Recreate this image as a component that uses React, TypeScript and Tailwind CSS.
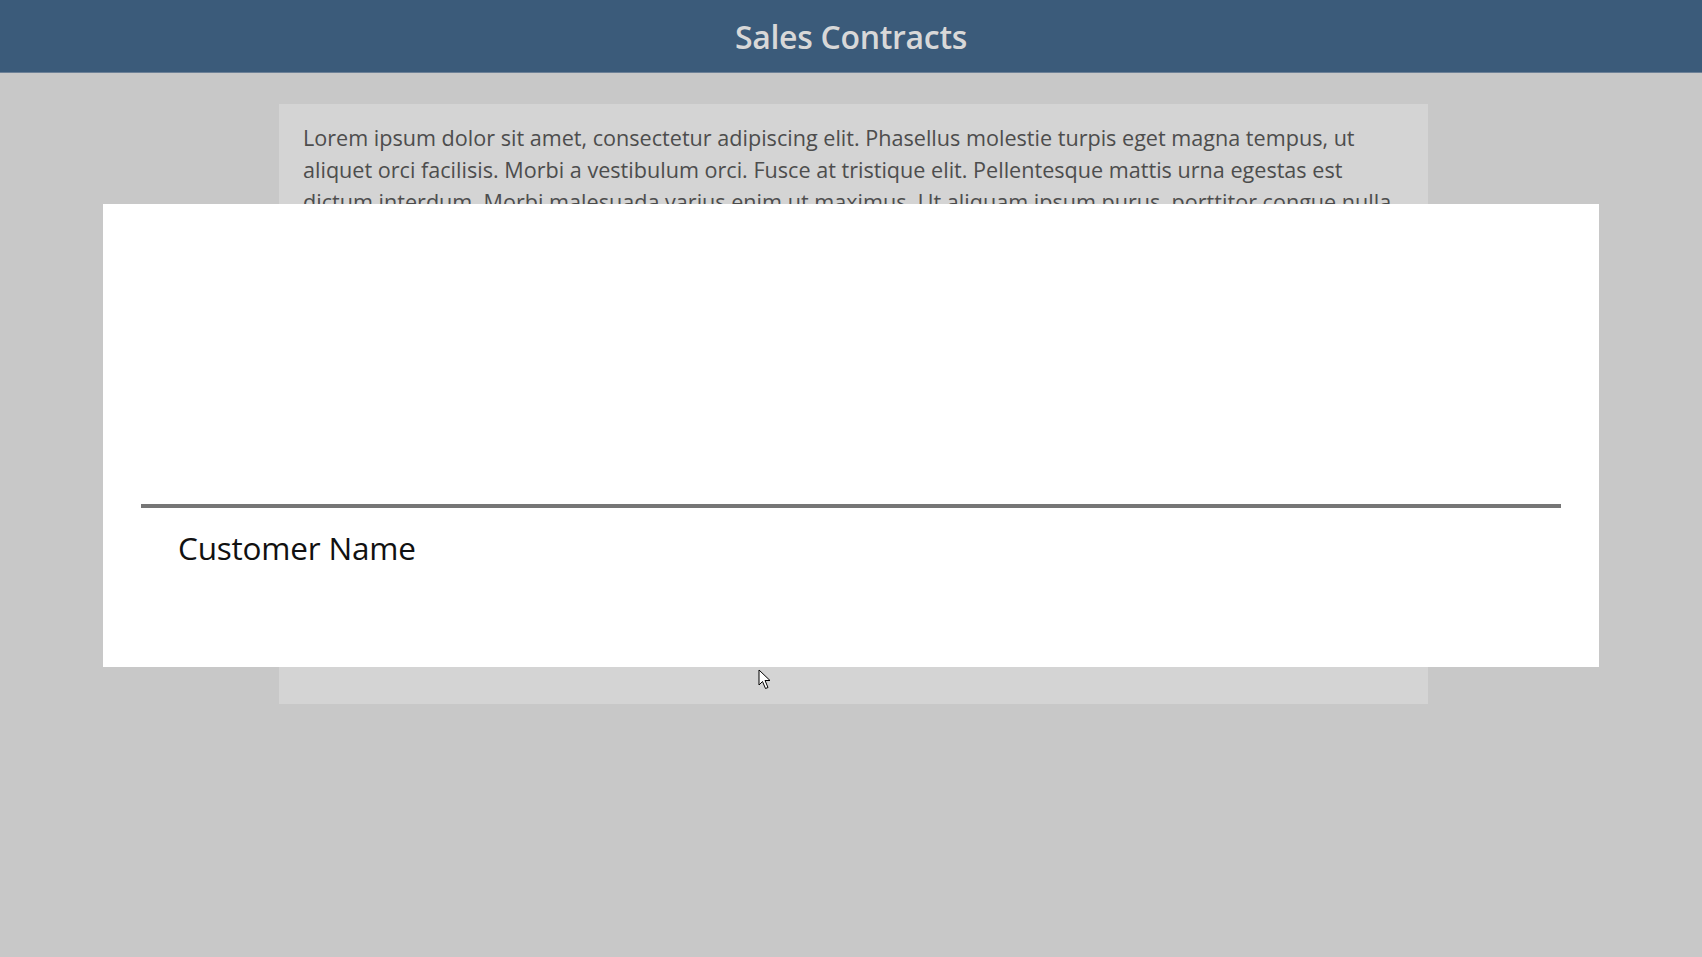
import React from "react";

export default function App() {
  return (
    <div className="relative w-[1702px] h-[957px] overflow-hidden bg-[#c8c8c8]" style={{ fontFamily: '"Open Sans", "Noto Sans", sans-serif' }}>
      <header className="h-[73px] bg-[#3b5b7a] border-b border-[#6d8197] flex items-center justify-center">
        <h1 className="text-[32px] font-semibold text-[#d8d8d8] tracking-[-0.3px] leading-none pt-[2px]">Sales Contracts</h1>
      </header>
      <div className="pt-[31px] pl-[279px]">
        <div className="w-[1149px] h-[600px] bg-[#d4d4d4] pl-[24px] pr-[24px] pt-[18px] overflow-hidden">
          <p className="text-[21.6px] leading-[32px] text-[#4d4d4d]">
            Lorem ipsum dolor sit amet, consectetur adipiscing elit. Phasellus molestie turpis eget magna tempus, ut aliquet orci facilisis. Morbi a vestibulum orci. Fusce at tristique elit. Pellentesque mattis urna egestas est dictum interdum. Morbi malesuada varius enim ut maximus. Ut aliquam ipsum purus, porttitor congue nulla vehicula nec. Sed posuere sem ut sapien tempor, sed feugiat nisl iaculis. Integer ac feugiat elit. Nunc sit amet dolor a lacus ultricies tincidunt. Aliquam erat volutpat. Donec dapibus lectus at massa ornare, vel congue metus malesuada. Curabitur eget lorem ut lectus pretium dictum.
          </p>
        </div>
      </div>
      <div className="absolute left-[103px] top-[204px] w-[1496px] h-[463px] bg-white">
        <div className="mt-[300px] mx-[38px] h-[4px] bg-[#767676]" />
        <div className="pl-[75px] pt-[18px] text-[31.5px] leading-[44px] text-[#111] tracking-[-0.2px]">Customer Name</div>
      </div>
      <svg className="absolute left-[758px] top-[669px]" width="14" height="22" viewBox="0 0 14 22">
        <path d="M1 1 L1 16 L4.5 12.5 L7.5 19.5 L10 18.5 L7 11.5 L12 11.5 Z" fill="white" stroke="black" strokeWidth="1" strokeLinejoin="round" />
      </svg>
    </div>
  );
}
